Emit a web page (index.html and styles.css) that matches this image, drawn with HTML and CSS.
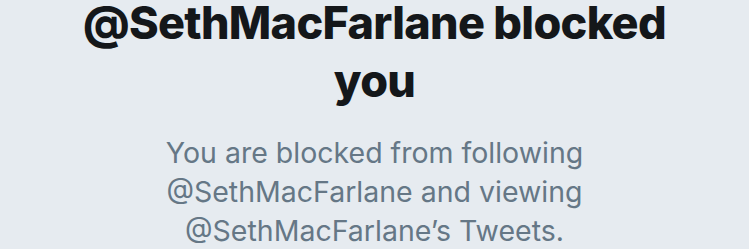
FILE: index.html
```html
<!DOCTYPE html>
<html>
<head>
<meta charset="utf-8">
<link rel="stylesheet" href="styles.css">
</head>
<body>
<div class="blocked">
  <h1 class="title">@SethMacFarlane blocked you</h1>
  <p class="desc">You are blocked from following @SethMacFarlane and viewing @SethMacFarlane’s Tweets.</p>
</div>
</body>
</html>
```
FILE: styles.css
```css
html, body {
  margin: 0;
  padding: 0;
  background: #e6ebf0;
  width: 749px;
  height: 249px;
  overflow: hidden;
}
.blocked {
  display: flex;
  flex-direction: column;
  align-items: center;
  text-align: center;
}
.title {
  margin: -6px 0 0 0;
  width: 640px;
  font-family: Inter, "Liberation Sans", sans-serif;
  font-weight: 800;
  font-size: 45px;
  letter-spacing: -0.7px;
  line-height: 58px;
  color: #14171a;
}
.desc {
  margin: 23px 0 0 0;
  width: 470px;
  font-family: Inter, "Liberation Sans", sans-serif;
  font-weight: 400;
  font-size: 28.5px;
  line-height: 39px;
  color: #657786;
}
```
